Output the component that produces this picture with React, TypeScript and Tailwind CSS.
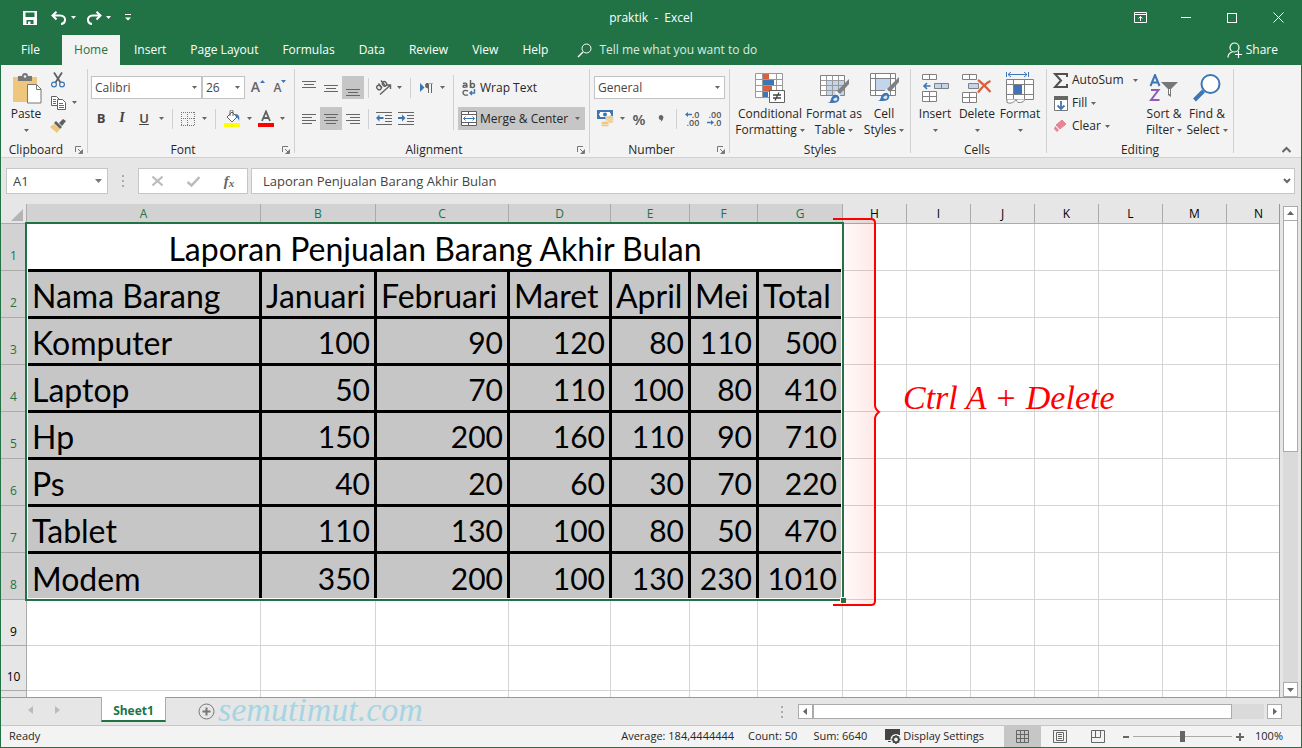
import React from 'react';

interface BoxProps {
  children?: React.ReactNode;
  className?: string;
}

const columns = [
  { name: 'A', width: 'w-[234px]' },
  { name: 'B', width: 'w-[115px]' },
  { name: 'C', width: 'w-[133px]' },
  { name: 'D', width: 'w-[102px]' },
  { name: 'E', width: 'w-[79px]' },
  { name: 'F', width: 'w-[68px]' },
  { name: 'G', width: 'w-[85px]' },
  { name: 'H', width: 'w-[64px]' },
  { name: 'I', width: 'w-[64px]' },
  { name: 'J', width: 'w-[64px]' },
  { name: 'K', width: 'w-[64px]' },
  { name: 'L', width: 'w-[64px]' },
  { name: 'M', width: 'w-[64px]' },
];

const emptyColumns = ['H', 'I', 'J', 'K', 'L', 'M', 'N'];

const rows: (string | number)[][] = [
  ['Nama Barang', 'Januari', 'Februari', 'Maret', 'April', 'Mei', 'Total'],
  ['Komputer', 100, 90, 120, 80, 110, 500],
  ['Laptop', 50, 70, 110, 100, 80, 410],
  ['Hp', 150, 200, 160, 110, 90, 710],
  ['Ps', 40, 20, 60, 30, 70, 220],
  ['Tablet', 110, 130, 100, 80, 50, 470],
  ['Modem', 350, 200, 100, 130, 230, 1010],
];

const Caret: React.FC<{ className?: string }> = ({ className = 'text-[#666]' }) => (
  <svg width="5" height="3" viewBox="0 0 5 3" className={`shrink-0 ${className}`} fill="currentColor">
    <path d="M0 0h5L2.5 3z" />
  </svg>
);

const ArrowButton: React.FC<{ label: string; className?: string }> = ({ label, className = 'w-3' }) => (
  <button type="button" aria-label={label} className={`flex h-full shrink-0 items-center justify-center ${className}`}>
    <Caret />
  </button>
);

const IconButton: React.FC<BoxProps & { label: string }> = ({ label, children, className = 'w-[22px]' }) => (
  <button type="button" aria-label={label} className={`flex h-full shrink-0 items-center justify-center ${className}`}>
    {children}
  </button>
);

const Sep: React.FC<{ className?: string }> = ({ className = 'mx-[5px]' }) => (
  <span className={`h-5 w-px shrink-0 bg-[#d0d0d0] ${className}`} />
);

const Combo: React.FC<{ label: string; value: string; className: string }> = ({ label, value, className }) => (
  <label className={`relative flex h-[23px] items-center ${className}`}>
    <select
      aria-label={label}
      className="h-full w-full appearance-none border border-[#c3c3c3] bg-white pl-[3px] text-xs text-[#444] outline-none"
    >
      <option>{value}</option>
    </select>
    <Caret className="pointer-events-none absolute right-[5px] text-[#666]" />
  </label>
);

const Group: React.FC<BoxProps & { title: string; launcher?: boolean }> = ({
  title,
  launcher,
  children,
  className = '',
}) => (
  <section className={`relative flex h-[84px] shrink-0 flex-col border-r border-[#d0d0d0] ${className}`}>
    <div className="flex h-[72px]">{children}</div>
    <div className="relative h-3 text-center leading-[18px]">
      <span className={launcher ? 'pr-4' : 'pr-1.5'}>{title}</span>
      {launcher && (
        <button type="button" aria-label={`${title} settings`} className="absolute top-[5px] right-1">
          <svg width="8" height="8" viewBox="0 0 8 8" fill="none" stroke="#777">
            <path d="M.5 6V.5H6M3 3l3 3M7.5 3.5v4h-4" />
            <path d="M7 4v3H4z" fill="#777" stroke="none" />
          </svg>
        </button>
      )}
    </div>
  </section>
);

const BigButton: React.FC<BoxProps & { lines: [string, string?] }> = ({ lines, children, className = '' }) => (
  <button type="button" className={`flex shrink-0 flex-col items-center pt-[3px] leading-4 ${className}`}>
    <span className="mb-0.5 flex h-8 items-center justify-center">{children}</span>
    <span className="whitespace-nowrap">{lines[0]}</span>
    <span className="flex h-4 items-center gap-[3px] whitespace-nowrap">
      {lines[1]}
      <Caret />
    </span>
  </button>
);

/* Horizontal strokes of an alignment icon, given as [x, width] pairs */
const Lines: React.FC<{ bars: [number, number][]; y?: number }> = ({ bars, y = 0 }) => (
  <svg width="14" height="16" viewBox="0 0 14 16" fill="#666">
    {bars.map(([x, w], i) => (
      <rect key={i} x={x} y={y + i * 3} width={w} height="1" />
    ))}
  </svg>
);

const IndentIcon: React.FC<{ right?: boolean }> = ({ right }) => (
  <svg width="16" height="14" viewBox="0 0 16 14">
    <path d="M0 .5h16M9 3.500h7M9 6.500h7M9 9.500h7M0 12.500h16" stroke="#666" />
    <path
      d={right ? 'M7.5 6 4 2.500V5H0v2h4v2.500z' : 'M0 6 3.500 2.500V5h4v2h-4v2.500z'}
      fill="#3e76b5"
    />
  </svg>
);

const Brush: React.FC = () => (
  <g>
    <path d="M28 5v5l-9 10-3-3z" fill="#808080" />
    <path d="m15.500 17 4 4-2 2-4-4z" fill="#f3f3f3" />
    <path d="M6 29c4 0 3-3 5-6s6-3 7 0-1 6-6 6z" fill="#3e76b5" />
    <path d="M12 26c1-2 3-3 4-2s0 3-2 3z" fill="#dce8f6" />
  </g>
);

const TitleBar: React.FC = () => (
  <header className="flex h-[35px] items-center bg-[#217346] text-white">
    <div className="flex w-[450px] items-center pl-[22px]">
      <button type="button" aria-label="Save">
        <svg width="14" height="14" viewBox="0 0 14 14">
          <path d="M0 0h14v14H0z" fill="white" />
          <path d="M2.500 1.500h9V6h-9zM3.500 9h7v4h-7z" fill="#217346" />
          <path d="M5 10.500h2.500V13H5z" fill="white" />
        </svg>
      </button>
      <button type="button" aria-label="Undo" className="ml-3.5">
        <svg width="16" height="14" viewBox="0 0 16 14" fill="none" stroke="white" strokeWidth="2">
          <path d="M5.500.8 1.500 4.500l4 4M2 4.500h7c4 0 5.500 2.500 5 5s-2 3.500-4 3.500" />
        </svg>
      </button>
      <button type="button" aria-label="Undo list" className="ml-1"><Caret className="text-white" /></button>
      <button type="button" aria-label="Redo" className="ml-2.5">
        <svg width="16" height="14" viewBox="0 0 16 14" fill="none" stroke="white" strokeWidth="2">
          <path d="m10.500.8 4 3.700-4 4M14 4.500H7C3 4.500 1.500 7 2 9.500S4 13 6 13" />
        </svg>
      </button>
      <button type="button" aria-label="Redo list" className="ml-1"><Caret className="text-white" /></button>
      <button type="button" aria-label="Customize toolbar" className="ml-[14px]">
        <svg width="6" height="7" viewBox="0 0 6 7" fill="white">
          <path d="M0 0h6v1H0zM0 3.500h6L3 6.500z" />
        </svg>
      </button>
    </div>
    <h1 className="flex-1 text-center whitespace-pre">praktik  -  Excel</h1>
    <div className="flex w-[450px] justify-end">
      <button type="button" aria-label="Ribbon display options" className="flex w-[46px] justify-center">
        <svg width="13" height="11" viewBox="0 0 13 11" fill="none" stroke="white">
          <path d="M.5.500h12v10H.5zM.5 2.500h12M6.500 9V4.500M4.500 6.500l2-2 2 2" />
        </svg>
      </button>
      <button type="button" aria-label="Minimize" className="flex w-[46px] items-center justify-center">
        <span className="h-px w-2.5 bg-white" />
      </button>
      <button type="button" aria-label="Maximize" className="flex w-[46px] items-center justify-center">
        <span className="size-2.5 border border-white" />
      </button>
      <button type="button" aria-label="Close" className="flex w-[46px] items-center justify-center">
        <svg width="11" height="11" viewBox="0 0 11 11" stroke="white"><path d="m.5.500 10 10M10.500.5l-10 10" /></svg>
      </button>
    </div>
  </header>
);

const TabBar: React.FC = () => (
  <nav className="flex h-[30px] items-stretch bg-[#217346] text-white">
    <button type="button" className="w-[61px] pr-0.5">File</button>
    <button type="button" className="mr-0.5 w-[58px] bg-[#f3f3f3] text-[#217346]">Home</button>
    {['Insert', 'Page Layout', 'Formulas', 'Data', 'Review', 'View', 'Help'].map((tab) => (
      <button key={tab} type="button" className="px-3">{tab}</button>
    ))}
    <button type="button" className="ml-[17px] flex items-center gap-[7px]">
      <svg width="15" height="15" viewBox="0 0 15 15" fill="none" stroke="white">
        <circle cx="9.500" cy="5.500" r="4.500" /><path d="m6 9-5 5" strokeWidth="1.500" />
      </svg>
      <span className="text-[#dcebe2]">Tell me what you want to do</span>
    </button>
    <button type="button" className="mr-[23px] ml-auto flex items-center gap-[3px]">
      <svg width="16" height="16" viewBox="0 0 16 16" fill="none" stroke="white" strokeWidth="1.200">
        <circle cx="7.500" cy="5.500" r="4.500" /><path d="M1 15.500c0-3 2-5 4.500-5.500M8 12.500h7M11.500 9v7" />
      </svg>
      Share
    </button>
  </nav>
);

const ClipboardGroup: React.FC = () => (
  <Group title="Clipboard" launcher className="w-[87px]">
    <BigButton lines={['Paste']} className="ml-1 w-[42px]">
      <svg width="32" height="31" viewBox="-3 0 32 31">
        <path d="M0 4h24v25H0z" fill="#eec77c" />
        <path d="M5 3h4a3 3 0 0 1 6 0h4v5H5z" fill="#777" />
        <circle cx="12" cy="3.500" r="1.300" fill="#f3f3f3" />
        <path d="M14.500 11.500h9l4.500 4.500v14H14.500z" fill="white" stroke="#777" />
        <path d="M23.500 12v4.500h4.500" fill="none" stroke="#777" />
      </svg>
    </BigButton>
    <div className="ml-0.5 flex flex-col">
      <div className="flex h-[22px]">
        <IconButton label="Cut" className="w-[18px]">
          <svg width="14" height="16" viewBox="0 0 14 16" fill="none">
            <path d="m3 .5 6.500 10M11 .5l-6.500 10" stroke="#606060" strokeWidth="1.800" />
            <circle cx="3" cy="12.500" r="2.400" stroke="#3e76b5" strokeWidth="1.200" />
            <circle cx="11" cy="12.500" r="2.400" stroke="#3e76b5" strokeWidth="1.200" />
          </svg>
        </IconButton>
      </div>
      <div className="flex h-[23px]">
        <IconButton label="Copy" className="w-[18px]">
          <svg width="15" height="14" viewBox="0 0 15 14" fill="white" stroke="#606060">
            <path d="M.5.500h5l3 3v6h-8z" />
            <path d="M6.500 3.500h5l3 3v7h-8z" />
            <path d="M2 3.500h3M2 5.500h3M2 7.500h3M8 7.500h4M8 9.500h5M8 11.500h5" stroke="#3e76b5" />
          </svg>
        </IconButton>
        <ArrowButton label="Copy options" className="ml-px w-3" />
      </div>
      <div className="flex h-[23px]">
        <IconButton label="Format Painter" className="w-[18px]">
          <svg width="16" height="14" viewBox="0 0 16 14">
            <path d="m13 0 3 2-4 5-3-3z" fill="#606060" />
            <path d="m6 2 6 6-2 2-6-6z" fill="#606060" />
            <path d="m4 5 6 5-3 4-7-6z" fill="#eec77c" />
          </svg>
        </IconButton>
      </div>
    </div>
  </Group>
);

const FontGroup: React.FC = () => (
  <Group title="Font" launcher className="w-[207px]">
    <div className="flex flex-col gap-2 pt-[7px] pl-[3px]">
      <div className="flex h-[23px]">
        <Combo label="Font name" value="Calibri" className="w-[111px]" />
        <Combo label="Font size" value="26" className="w-[43px]" />
        <IconButton label="Increase font size" className="ml-0.5 w-[22px]">
          <span className="text-[14px] font-semibold text-[#666]">A</span>
          <svg width="5" height="3" viewBox="0 0 5 3" className="mb-3"><path d="M0 3h5L2.500 0z" fill="#3e76b5" /></svg>
        </IconButton>
        <IconButton label="Decrease font size">
          <span className="text-[12px] font-semibold text-[#666]">A</span>
          <svg width="5" height="3" viewBox="0 0 5 3" className="mb-3"><path d="M0 0h5L2.500 3z" fill="#3e76b5" /></svg>
        </IconButton>
      </div>
      <div className="flex h-[23px] items-center text-[13px] text-[#444]">
        <IconButton label="Bold" className="w-5"><b>B</b></IconButton>
        <IconButton label="Italic"><i className="font-['Liberation_Serif',serif] text-[14px] font-bold">I</i></IconButton>
        <IconButton label="Underline"><span className="font-semibold underline">U</span></IconButton>
        <ArrowButton label="Underline options" />
        <Sep />
        <IconButton label="Borders" className="w-5">
          <svg width="14" height="14" viewBox="0 0 14 14" stroke="#777" strokeDasharray="1 1" fill="none">
            <path d="M0 .5h14M0 6.500h14M0 13.500h14M.5 0v14M6.500 0v14M13.500 0v14" />
          </svg>
        </IconButton>
        <ArrowButton label="Border options" />
        <Sep />
        <IconButton label="Fill color" className="w-[22px]">
          <svg width="17" height="17" viewBox="0 0 17 17">
            <path d="M3 7 8 2l5 5-5 5z" fill="white" stroke="#606060" />
            <path d="M6 6V1.500a1.500 1.500 0 0 1 3 0V6" fill="none" stroke="#606060" />
            <path d="M11 4c4 0 5 3 4 7-1-3-2-4-4-5z" fill="#3e76b5" />
            <path d="M0 13h16v4H0z" fill="#ff0" />
          </svg>
        </IconButton>
        <ArrowButton label="Fill color options" />
        <IconButton label="Font color">
          <svg width="16" height="17" viewBox="0 0 16 17">
            <path d="M4 11 8 1.500 12 11M5.500 8h5" fill="none" stroke="#606060" strokeWidth="1.800" />
            <path d="M0 13h16v4H0z" fill="red" />
          </svg>
        </IconButton>
        <ArrowButton label="Font color options" className="w-2.5" />
      </div>
    </div>
  </Group>
);

const AlignmentGroup: React.FC = () => (
  <Group title="Alignment" launcher className="w-[295px]">
    <div className="flex w-[158px] flex-col gap-2 pt-[7px] pl-[3px]">
      <div className="flex h-[23px] items-center">
        <IconButton label="Top align"><Lines y={1} bars={[[0, 14], [2, 10], [0, 14]]} /></IconButton>
        <IconButton label="Middle align"><Lines y={5} bars={[[0, 14], [2, 10], [0, 14]]} /></IconButton>
        <IconButton label="Bottom align" className="w-[22px] bg-[#c6c6c6]">
          <Lines y={9} bars={[[0, 14], [2, 10], [0, 14]]} />
        </IconButton>
        <Sep className="mx-1" />
        <IconButton label="Orientation" className="w-5">
          <svg width="17" height="16" viewBox="0 0 17 16" fill="none" stroke="#606060" strokeWidth="1.400">
            <ellipse cx="4" cy="7.500" rx="2" ry="2.400" transform="rotate(-45 4 7.500)" />
            <path d="M3.500 3.500 7 8M6 .5 10.500 6" />
            <ellipse cx="9.500" cy="3.800" rx="2" ry="2.400" transform="rotate(-45 9.500 3.800)" />
            <path d="m5 14.500 10-9M11.500 5H15.500v4" />
          </svg>
        </IconButton>
        <ArrowButton label="Orientation options" />
        <Sep />
        <IconButton label="Text direction" className="w-5">
          <svg width="13" height="10" viewBox="0 0 13 10">
            <path d="m0 0 4.500 4.500L0 9z" fill="#3e76b5" />
            <path d="M8 5a2.500 2.500 0 0 1 0-5h5M8.500 1v9M11.500 1v9" fill="none" stroke="#666" />
            <path d="M8 0a2.500 2.500 0 0 0 0 5z" fill="#666" />
          </svg>
        </IconButton>
        <ArrowButton label="Text direction options" />
      </div>
      <div className="flex h-[23px] items-center">
        <IconButton label="Align left"><Lines y={3} bars={[[0, 14], [0, 10], [0, 14], [0, 10]]} /></IconButton>
        <IconButton label="Center" className="w-[22px] bg-[#c6c6c6]">
          <Lines y={3} bars={[[0, 14], [2, 10], [0, 14], [2, 10]]} />
        </IconButton>
        <IconButton label="Align right"><Lines y={3} bars={[[0, 14], [4, 10], [0, 14], [4, 10]]} /></IconButton>
        <Sep className="mx-1" />
        <IconButton label="Decrease indent"><IndentIcon /></IconButton>
        <IconButton label="Increase indent"><IndentIcon right /></IconButton>
      </div>
    </div>
    <span className="mt-1.5 h-[55px] w-px bg-[#d0d0d0]" />
    <div className="flex flex-1 flex-col gap-2 pt-[7px] pr-1 pl-1">
      <button type="button" className="flex h-[23px] items-center gap-1 pl-1">
        <svg width="14" height="16" viewBox="0 0 14 16" fill="none" stroke="#606060" strokeWidth="1.400">
          <path d="M1 3.500c4-1 4 0 4 4M5 5C2 5 1 5.500 1 6.500S4 8 5 6M8.500 0v8" />
          <circle cx="10.500" cy="5.500" r="2" /><path d="M6 11c-3-1.500-5 0-5 1.800s2 3 5 2" />
          <path d="M12.500 9v4H8M10 11l-2 2 2 2" stroke="#3e76b5" />
        </svg>
        Wrap Text
      </button>
      <button type="button" className="flex h-[23px] items-center gap-[3px] bg-[#c6c6c6] pr-[5px] pl-[3px] whitespace-nowrap">
        <svg width="16" height="15" viewBox="0 0 16 15" fill="white" stroke="#606060">
          <path d="M.5.500h15v14H.5zM.5 3.500h15M.5 11.500h15M7.500.5v3M7.500 11.500v3" />
          <path d="M2.500 7.500h11M4.500 5.500l-2 2 2 2M11.500 5.500l2 2-2 2" stroke="#3e76b5" fill="none" />
        </svg>
        Merge &amp; Center
        <span className="ml-auto"><Caret /></span>
      </button>
    </div>
  </Group>
);

const NumberGroup: React.FC = () => (
  <Group title="Number" launcher className="w-[140px]">
    <div className="flex flex-col gap-2 pt-[7px] pl-1">
      <Combo label="Number format" value="General" className="w-[131px]" />
      <div className="flex h-[23px] items-center text-[#555]">
        <IconButton label="Accounting format">
          <svg width="17" height="17" viewBox="0 0 17 17">
            <path d="M0 0h16v9H0z" fill="#3e76b5" />
            <path d="M3 2h10v1.500h1v2h-1V7H3V5.500H2v-2h1z" fill="white" />
            <circle cx="8" cy="4.500" r="2" fill="#3e76b5" />
            <g fill="#eec77c" stroke="#f3f3f3" strokeWidth=".6">
              <ellipse cx="12.500" cy="11.500" rx="4" ry="1.700" />
              <ellipse cx="12.500" cy="9.500" rx="4" ry="1.700" />
              <ellipse cx="12.500" cy="7.500" rx="4" ry="1.700" />
              <ellipse cx="8" cy="15" rx="4" ry="1.700" />
              <ellipse cx="8" cy="13" rx="4" ry="1.700" />
            </g>
          </svg>
        </IconButton>
        <ArrowButton label="Currency options" />
        <IconButton label="Percent style"><span className="text-[15px] font-semibold">%</span></IconButton>
        <IconButton label="Comma style">
          <svg width="6" height="9" viewBox="0 0 6 9"><path d="M1 9c2-1 2-2 2-3C0 6 0 1 3 1s4 5-2 8z" fill="#666" /></svg>
        </IconButton>
        <Sep className="mx-1" />
        <IconButton label="Increase decimal">
          <span className="flex flex-col items-end text-[9px] leading-[8px] font-semibold">
            <span className="flex items-center">
              <svg width="7" height="5" viewBox="0 0 7 5"><path d="M0 2.500 3 0v1.700h4v1.600H3V5z" fill="#3e76b5" /></svg>.0
            </span>
            <span>.00</span>
          </span>
        </IconButton>
        <IconButton label="Decrease decimal">
          <span className="flex flex-col items-end text-[9px] leading-[8px] font-semibold">
            <span>.00</span>
            <span className="flex items-center">
              <svg width="7" height="5" viewBox="0 0 7 5"><path d="M7 2.500 4 0v1.700H0v1.600h4V5z" fill="#3e76b5" /></svg>.0
            </span>
          </span>
        </IconButton>
      </div>
    </div>
  </Group>
);

const StylesGroup: React.FC = () => (
  <Group title="Styles" className="w-[181px] pl-1.5">
    <BigButton lines={['Conditional', 'Formatting']} className="w-[68px]">
      <svg width="30" height="31" viewBox="0 0 30 31">
        <path d="M.5.500h27v24H.5zM.5 6.500h27M.5 12.500h27M.5 18.500h27M7.500.5v24M21.500.5v24" fill="white" stroke="#999" />
        <path d="M8 1h6v5H8zM8 13h9v5H8z" fill="#d8603c" />
        <path d="M8 7h11v5H8zM8 19h5v5H8z" fill="#3e76b5" />
        <path d="M14.500 17.500h15v12h-15z" fill="white" stroke="#606060" />
        <path d="M18 22h8M18 25h8M24 19.500l-4 8" stroke="#444" strokeWidth="1.300" />
      </svg>
    </BigButton>
    <BigButton lines={['Format as', 'Table']} className="w-[60px]">
      <svg width="30" height="31" viewBox="-1 0 30 31">
        <path d="M.5 2.500h24v20H.5z" fill="white" stroke="#808080" />
        <path d="M7 8h17v14H7z" fill="#c3d5ea" />
        <path d="M.5 7.500h24M.5 12.500h24M.5 17.500h24M6.500 2.500v20M12.500 2.500v20M18.500 2.500v20" stroke="#999" />
        <g transform="translate(1 1)"><Brush /></g>
      </svg>
    </BigButton>
    <BigButton lines={['Cell', 'Styles']} className="w-10">
      <svg width="30" height="31" viewBox="-1 0 30 31">
        <path d="M.5.500h25v22H.5zM5.500.5v22M20.500.5v22M.5 5.500h25M.5 17.500h25" fill="white" stroke="#808080" />
        <path d="M6 6h14v11H6z" fill="#c3d5ea" />
        <g transform="translate(1 -1)"><Brush /></g>
      </svg>
    </BigButton>
  </Group>
);

const CellsGroup: React.FC = () => (
  <Group title="Cells" className="w-[136px] pl-[3px]">
    <BigButton lines={['Insert']} className="w-[42px]">
      <svg width="27" height="29" viewBox="0 0 27 29" fill="white" stroke="#808080">
        <path d="M.5.500h14v5H.5zM7.500.5v5M.5 17.500h14v10H.5zM.5 22.500h14M7.500 17.500v10" />
        <path d="M12.500 9.500h14v5h-14zM19.500 9.500v5" fill="#c3d5ea" />
        <path d="M8.500 12H2M5 9l-3 3 3 3" stroke="#3e76b5" strokeWidth="1.600" fill="none" />
      </svg>
    </BigButton>
    <BigButton lines={['Delete']} className="w-[42px]">
      <svg width="30" height="29" viewBox="0 0 30 29" fill="white" stroke="#808080">
        <path d="M.5.500h14v5H.5zM7.500.5v5M.5 18.500h14v10H.5zM.5 23.500h14M7.500 18.500v10" />
        <path d="M6.500 9.500h10v5h-10z" fill="#c3d5ea" />
        <path d="M16 6c4 3 8 7 12.500 12M28.500 7C24 9 20 13 16 18.500" stroke="#d8603c" strokeWidth="2.200" fill="none" />
      </svg>
    </BigButton>
    <BigButton lines={['Format']} className="w-11">
      <svg width="28" height="32" viewBox="0 0 28 32" fill="white" stroke="#808080">
        <path d="M.5 7.500h27v20H.5zM7.500 7.500v20M.5 12.500h27M.5 22.500h27M18.500 7.500v20" />
        <path d="M8 13h8v9H8z" fill="#3e76b5" stroke="none" />
        <path d="M1 27.500v3c4 2 8-1 9-3 1 5 8 3 9 0" />
        <path d="M.5 0v5M22.500 0v5M2 2.500h19M5 0 2 2.500 5 5M18 0l3 2.500L18 5" stroke="#3e76b5" fill="none" />
      </svg>
    </BigButton>
  </Group>
);

const EditingGroup: React.FC = () => (
  <Group title="Editing" className="w-[187px] pl-1.5">
    <div className="flex w-[90px] flex-col">
      <button type="button" className="flex h-[22px] items-center gap-1 pr-[5px]">
        <svg width="15" height="15" viewBox="0 0 15 15" fill="none" stroke="#505050" strokeWidth="2">
          <path d="M14 4V1H2l6 6.500L2 14h12v-3" />
        </svg>
        AutoSum
        <span className="ml-auto"><Caret /></span>
      </button>
      <button type="button" className="flex h-6 items-center gap-1">
        <svg width="15" height="15" viewBox="0 0 15 15">
          <path d="M1.500.500h13v14h-13z" fill="white" stroke="#777" />
          <path d="M1 0h14v4H1z" fill="#666" />
          <path d="M8 5v8M4.500 9.500 8 13l3.500-3.500" fill="none" stroke="#3e76b5" strokeWidth="1.800" />
        </svg>
        Fill
        <Caret />
      </button>
      <button type="button" className="flex h-[22px] items-center gap-1">
        <svg width="15" height="14" viewBox="0 0 15 14" fill="#e98398">
          <path d="m9 1 4 4-6 5-4-4z" stroke="#e98398" /><path d="m2 7 4 4-2 2-3-3z" />
        </svg>
        Clear
        <Caret />
      </button>
    </div>
    <BigButton lines={['Sort &', 'Filter']} className="w-[42px]">
      <svg width="30" height="29" viewBox="0 0 30 29" fill="none">
        <path d="M1.500 12 6 1l4.500 11M3 8.500h6" stroke="#3e76b5" strokeWidth="2" />
        <path d="M2 16h7.500L2 26h8.500" stroke="#8e5bb5" strokeWidth="2" />
        <path d="M12 8h17l-7 7v8l-3-2v-6z" fill="#777" />
        <path d="M20.500 15v5" stroke="white" />
      </svg>
    </BigButton>
    <BigButton lines={['Find &', 'Select']} className="w-11">
      <svg width="28" height="28" viewBox="0 0 28 28" fill="none" stroke="#3e76b5">
        <circle cx="17.500" cy="10" r="9" strokeWidth="2" fill="white" />
        <path d="m10.500 17-9 9" strokeWidth="4" />
      </svg>
    </BigButton>
  </Group>
);

const FormulaBar: React.FC = () => (
  <div className="flex h-[46px] items-start bg-[#e6e6e6] pt-2.5 pr-1.5 pl-[5px] text-[13px] text-[#444]">
    <label className="relative flex h-[26px] w-[102px] items-center">
      <input
        aria-label="Name Box"
        defaultValue="A1"
        className="h-full w-full border border-[#c6c6c6] bg-white pl-1.5 outline-none"
      />
      <svg width="7" height="4" viewBox="0 0 7 4" className="pointer-events-none absolute right-1.5"><path d="M0 0h7L3.500 4z" fill="#777" /></svg>
    </label>
    <span className="flex h-[26px] w-[30px] flex-col items-center justify-center gap-[3px]">
      <i className="size-0.5 bg-[#aaa]" /><i className="size-0.5 bg-[#aaa]" /><i className="size-0.5 bg-[#aaa]" />
    </span>
    <div className="flex h-[26px] w-[110px] items-center border border-[#c6c6c6] bg-white">
      <IconButton label="Cancel" className="w-9">
        <svg width="11" height="10" viewBox="0 0 11 10" stroke="#bbb" strokeWidth="2"><path d="m.5.500 10 9M10.500.5l-10 9" /></svg>
      </IconButton>
      <IconButton label="Enter" className="w-9">
        <svg width="13" height="11" viewBox="0 0 13 11" fill="none" stroke="#bbb" strokeWidth="2.500"><path d="m.5 6 4 3.500L12.500 1" /></svg>
      </IconButton>
      <IconButton label="Insert function" className="w-9">
        <i className="font-['Liberation_Serif',serif] text-[15px] leading-4 font-bold text-[#666]">f</i>
        <i className="mt-1 font-['Liberation_Serif',serif] text-[11px] leading-3 font-bold text-[#666]">x</i>
      </IconButton>
    </div>
    <label className="relative ml-[3px] flex h-[26px] flex-1 items-center">
      <input
        aria-label="Formula Bar"
        defaultValue="Laporan Penjualan Barang Akhir Bulan"
        className="h-full w-full border border-[#c6c6c6] bg-white pl-[11px] outline-none"
      />
      <svg width="8" height="6" viewBox="0 0 8 6" fill="none" stroke="#666" strokeWidth="2" className="absolute right-1"><path d="m1 1 3 3 3-3" /></svg>
    </label>
  </div>
);

const RowHead: React.FC<{ n?: number; selected?: boolean }> = ({ n, selected }) => (
  <th
    className={
      selected
        ? 'border-r border-b border-[#ababab] bg-[#d2d2d2] p-0 pb-1.5 text-center align-bottom leading-4 font-normal text-[#217346]'
        : 'border-r border-b border-[#ababab] bg-[#e6e6e6] p-0 pb-[5px] text-center align-bottom leading-4 font-normal text-black'
    }
  >
    {n}
  </th>
);

const EmptyCells: React.FC<{ names?: string[] }> = ({ names = emptyColumns }) => (
  <>
    {names.map((name) => (
      <td key={name} className="border-r border-b border-[#d4d4d4]" />
    ))}
  </>
);

const Sheet: React.FC = () => {
  const allNames = [...columns.map((c) => c.name), 'N'];

  return (
    <div className="relative min-h-0 flex-1 overflow-hidden border-r border-[#999] bg-white">
      <table className="w-[calc(100%+12px)] table-fixed border-separate border-spacing-0">
        <colgroup>
          <col className="w-[26px]" />
          {columns.map((c) => <col key={c.name} className={c.width} />)}
          <col />
        </colgroup>
        <thead>
          <tr className="h-5">
            <th className="border-r border-b border-[#ababab] bg-[#e6e6e6] p-0">
              <svg width="12" height="12" viewBox="0 0 12 12" className="mt-[3px] ml-2.5"><path d="M12 0v12H0z" fill="#b4b4b4" /></svg>
            </th>
            {allNames.map((name, i) => (
              <th
                key={name}
                className={
                  i < 7
                    ? 'border-r border-b border-[#ababab] bg-[#d2d2d2] p-0 leading-4 font-normal text-[#217346]'
                    : 'border-r border-b border-[#ababab] bg-[#e6e6e6] p-0 leading-4 font-normal text-black'
                }
              >
                {name}
              </th>
            ))}
          </tr>
        </thead>
        <tbody>
          <tr className="h-[47px]">
            <RowHead n={1} selected />
            <td
              colSpan={7}
              className="border-b-2 border-black p-0 pt-[3px] text-center font-[Lato,sans-serif] text-[32px] leading-[41px] text-black"
            >
              Laporan Penjualan Barang Akhir Bulan
            </td>
            <EmptyCells />
          </tr>
          {rows.map((row, r) => (
            <tr key={r} className="h-[47px]">
              <RowHead n={r + 2} selected />
              {row.map((value, c) => (
                <td
                  key={c}
                  className={`border-t border-black bg-[#c6c6c6] pb-0 font-[Lato,sans-serif] whitespace-nowrap text-black ${
                    r < rows.length - 1 ? 'border-b-2' : ''
                  } ${c > 0 ? 'border-l' : ''} ${c < 6 ? 'border-r-2 pr-1' : 'pr-1.5'} ${
                    typeof value === 'number'
                      ? 'pt-0.5 pl-0 text-right text-[30px] leading-[42px]'
                      : c === 0
                        ? 'pt-[3px] pl-[5px] text-left text-[32px] leading-[41px]'
                        : 'pt-[3px] pl-1 text-left text-[32px] leading-[41px]'
                  }`}
                >
                  {value}
                </td>
              ))}
              <EmptyCells />
            </tr>
          ))}
          {[9, 10].map((n) => (
            <tr key={n} className={n === 9 ? 'h-[46px]' : 'h-[45px]'}>
              <RowHead n={n} />
              <EmptyCells names={allNames} />
            </tr>
          ))}
          <tr className="h-[45px]">
            <RowHead />
            <EmptyCells names={allNames} />
          </tr>
        </tbody>
      </table>
      {/* Selection frame and fill handle */}
      <div className="pointer-events-none absolute top-[18px] left-6 h-[379px] w-[819px] border-2 border-[#217346]">
        <div className="h-full border border-white" />
        <span className="absolute -right-1 -bottom-1 size-1.5 border-t border-l border-white bg-[#217346]" />
      </div>
      {/* Annotation */}
      <svg width="50" height="392" viewBox="0 0 50 392" className="absolute top-[13px] left-[831px]">
        <defs>
          <linearGradient id="brace">
            <stop offset="0" stopColor="#f00" stopOpacity="0" />
            <stop offset="1" stopColor="#f00" stopOpacity=".1" />
          </linearGradient>
        </defs>
        <path d="M1 2h38q4 0 4 4v182q0 4 4 7q-4 3-4 7v182q0 4-4 4H1z" fill="url(#brace)" />
        <path d="M1 2h38q4 0 4 4v182q0 4 4 7q-4 3-4 7v182q0 4-4 4H1" fill="none" stroke="#f00" strokeWidth="2" />
      </svg>
      <p className="absolute top-[172px] left-[902px] font-['Liberation_Serif',serif] text-[34px] leading-[44px] whitespace-nowrap text-[#f00] italic">
        Ctrl A + Delete
      </p>
    </div>
  );
};

const ScrollButton: React.FC<{ label: string; path: string }> = ({ label, path }) => (
  <button type="button" aria-label={label} className="flex size-[15px] shrink-0 items-center justify-center border border-[#ababab] bg-white">
    <svg width="7" height="7" viewBox="0 0 7 7"><path d={path} fill="#666" /></svg>
  </button>
);

const SheetTabs: React.FC = () => (
  <div className="relative flex h-7 items-start border-t border-[#999] bg-[#e6e6e6]">
    <div className="flex h-6 w-[100px] items-center gap-[22px] pl-[27px]">
      <button type="button" aria-label="Previous sheet"><svg width="5" height="8" viewBox="0 0 5 8"><path d="M5 0v8L0 4z" fill="#bbb" /></svg></button>
      <button type="button" aria-label="Next sheet"><svg width="5" height="8" viewBox="0 0 5 8"><path d="M0 0v8l5-4z" fill="#bbb" /></svg></button>
    </div>
    <button type="button" className="-mt-px h-[25px] w-[65px] border-x border-b-2 border-x-[#ababab] border-b-[#217346] bg-white pt-1 font-bold text-[#217346]">
      Sheet1
    </button>
    <button type="button" aria-label="New sheet" className="mt-[5px] ml-8">
      <svg width="17" height="17" viewBox="0 0 17 17" fill="none" stroke="#777">
        <circle cx="8.500" cy="8.500" r="7.500" /><path d="M8.500 4.500v8M4.500 8.500h8" strokeWidth="2" />
      </svg>
    </button>
    <span className="absolute -top-1.5 left-[217px] font-['Liberation_Serif',serif] text-[34px] leading-9 text-[#a5d5e3] italic">semutimut.com</span>
    <div className="mt-[6px] mr-[19px] ml-auto flex w-2/5 max-w-[501px] items-center">
      <span className="mr-[15px] flex flex-col gap-[3px]">
        <i className="size-0.5 bg-[#aaa]" /><i className="size-0.5 bg-[#aaa]" /><i className="size-0.5 bg-[#aaa]" />
      </span>
      <ScrollButton label="Scroll left" path="M5 0v7L1 3.500z" />
      <div className="mr-[3px] h-[15px] flex-1 bg-[#dadada]">
        <div className="h-full w-[93%] border border-[#ababab] bg-white" />
      </div>
      <ScrollButton label="Scroll right" path="M2 0v7l4-3.500z" />
    </div>
  </div>
);

const StatusBar: React.FC = () => (
  <footer className="flex h-[22px] items-center border-t border-[#c6c6c6] bg-[#f3f3f3] pr-[18px] pl-2 text-[11px] whitespace-nowrap">
    <span>Ready</span>
    <span className="ml-auto">Average: 184,4444444</span>
    <span className="ml-3.5">Count: 50</span>
    <span className="ml-4">Sum: 6640</span>
    <button type="button" className="ml-[18px] flex items-center gap-0.5">
      <svg width="16" height="16" viewBox="0 0 16 16">
        <path d="M0 0h15v6H8v5H0zM3 12h5v1H3z" fill="#444" />
        <circle cx="11" cy="10.500" r="5.500" fill="#f3f3f3" />
        <circle cx="11" cy="10.500" r="2.800" fill="none" stroke="#444" strokeWidth="1.800" />
        <path d="M11 6v2M11 13v2M6.500 10.500h2M13.500 10.500h2M8 7.500l1.500 1.500M12.500 12l1.500 1.500M14 7.500 12.500 9M9.500 12 8 13.500" stroke="#444" strokeWidth="1.500" />
      </svg>
      Display Settings
    </button>
    <div className="ml-5 flex h-full">
      <IconButton label="Normal view" className="w-[37px] bg-[#c6c6c6]">
        <svg width="13" height="13" viewBox="0 0 13 13" fill="none" stroke="#666"><path d="M.5.500h12v12H.5zM.5 4.500h12M.5 8.500h12M4.500.5v12M8.500.5v12" /></svg>
      </IconButton>
      <IconButton label="Page layout view" className="w-[38px]">
        <svg width="14" height="13" viewBox="0 0 14 13" fill="none" stroke="#666"><path d="M.5.500h13v12H.5zM3.500 2.500h7v8h-7zM5 4.500h4M5 6.500h4M5 8.500h4" /></svg>
      </IconButton>
      <IconButton label="Page break view" className="w-[38px]">
        <svg width="14" height="13" viewBox="0 0 14 13" fill="none" stroke="#666"><path d="M.5.500h13v12H.5zM4.500.5v7M9.500.5v7M.5 7.500h9" /></svg>
      </IconButton>
    </div>
    <button type="button" aria-label="Zoom out" className="ml-1.5"><svg width="6" height="2" viewBox="0 0 6 2"><path d="M0 0h6v2H0z" fill="#666" /></svg></button>
    <input
      type="range"
      aria-label="Zoom"
      defaultValue={50}
      className="mx-1 h-3 w-[99px] appearance-none bg-[linear-gradient(#aaa,#aaa)] bg-[length:100%_1px] bg-center bg-no-repeat [&::-webkit-slider-thumb]:h-[11px] [&::-webkit-slider-thumb]:w-[5px] [&::-webkit-slider-thumb]:appearance-none [&::-webkit-slider-thumb]:bg-[#666]"
    />
    <button type="button" aria-label="Zoom in"><svg width="8" height="8" viewBox="0 0 8 8"><path d="M3 0h2v3h3v2H5v3H3V5H0V3h3z" fill="#666" /></svg></button>
    <span className="ml-[11px]">100%</span>
  </footer>
);

const App: React.FC = () => (
  <div className="flex h-screen flex-col overflow-hidden border-x border-b border-[#217346] bg-[#e6e6e6] font-['Open_Sans',sans-serif] text-xs text-[#262626]">
    <TitleBar />
    <TabBar />
    <div className="flex h-[93px] border-b border-[#d2d2d2] bg-[#f3f3f3] pt-1">
      <ClipboardGroup />
      <FontGroup />
      <AlignmentGroup />
      <NumberGroup />
      <StylesGroup />
      <CellsGroup />
      <EditingGroup />
      <button type="button" aria-label="Collapse ribbon" className="mt-auto mr-2.5 mb-1 ml-auto">
        <svg width="9" height="7" viewBox="0 0 9 7" fill="none" stroke="#666" strokeWidth="2"><path d="m.5 6 4-4 4 4" /></svg>
      </button>
    </div>
    <FormulaBar />
    <main className="flex min-h-0 flex-1">
      <Sheet />
      <div className="flex w-[21px] flex-col pt-0.5 pl-[3px]">
        <ScrollButton label="Scroll up" path="M0 5h7L3.500 1z" />
        <div className="w-[15px] flex-1 bg-[#dadada]">
          <div className="h-1/2 w-full border border-t-0 border-[#ababab] bg-white" />
        </div>
        <ScrollButton label="Scroll down" path="M0 2h7L3.500 6z" />
      </div>
    </main>
    <SheetTabs />
    <StatusBar />
  </div>
);

export default App;
